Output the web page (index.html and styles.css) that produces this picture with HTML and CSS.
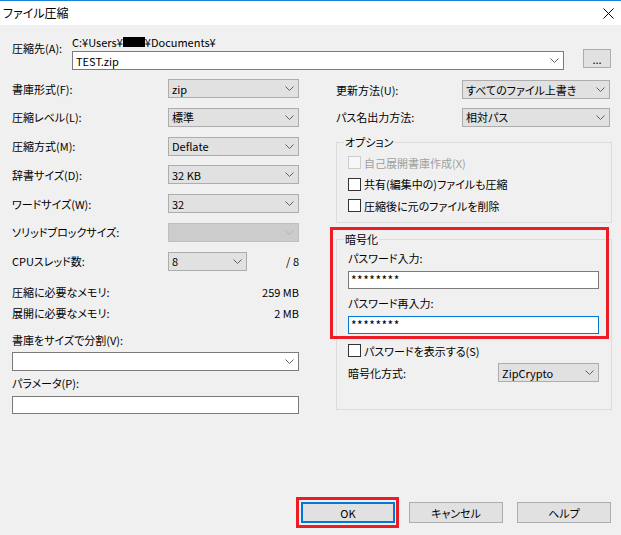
FILE: index.html
```html
<!DOCTYPE html>
<html lang="ja">
<head>
<meta charset="utf-8">
<title>ファイル圧縮</title>
<link rel="stylesheet" href="styles.css">
</head>
<body>
<div class="window">
  <div class="titlebar">
    <span class="title">ファイル圧縮</span>
    <svg class="close" width="11" height="11" viewBox="0 0 11 11"><path d="M0.5 0.5 L10.5 10.5 M10.5 0.5 L0.5 10.5" stroke="#000" stroke-width="1" fill="none"/></svg>
  </div>
  <div class="content">
    <div class="dest">
      <div class="dest-label">圧縮先(A):</div>
      <div class="dest-main">
        <div class="path">C:¥Users¥<span class="redact"></span>¥Documents¥</div>
        <div class="dest-row">
          <div class="combo edit dest-combo"><span>TEST.zip</span><svg class="chev" width="9" height="5" viewBox="0 0 9 5"><path d="M0.5 0.5 L4.5 4.5 L8.5 0.5" /></svg></div>
          <button class="btn browse">...</button>
        </div>
      </div>
    </div>

    <div class="columns">
      <div class="left">
        <div class="form-grid">
          <div class="lbl">書庫形式(F):</div>
          <div class="combo"><span>zip</span><svg class="chev" width="9" height="5" viewBox="0 0 9 5"><path d="M0.5 0.5 L4.5 4.5 L8.5 0.5" /></svg></div>
          <div class="lbl">圧縮レベル(L):</div>
          <div class="combo"><span>標準</span><svg class="chev" width="9" height="5" viewBox="0 0 9 5"><path d="M0.5 0.5 L4.5 4.5 L8.5 0.5" /></svg></div>
          <div class="lbl">圧縮方式(M):</div>
          <div class="combo"><span>Deflate</span><svg class="chev" width="9" height="5" viewBox="0 0 9 5"><path d="M0.5 0.5 L4.5 4.5 L8.5 0.5" /></svg></div>
          <div class="lbl">辞書サイズ(D):</div>
          <div class="combo"><span>32 KB</span><svg class="chev" width="9" height="5" viewBox="0 0 9 5"><path d="M0.5 0.5 L4.5 4.5 L8.5 0.5" /></svg></div>
          <div class="lbl">ワードサイズ(W):</div>
          <div class="combo"><span>32</span><svg class="chev" width="9" height="5" viewBox="0 0 9 5"><path d="M0.5 0.5 L4.5 4.5 L8.5 0.5" /></svg></div>
          <div class="lbl">ソリッドブロックサイズ:</div>
          <div class="combo disabled"><span></span><svg class="chev" width="9" height="5" viewBox="0 0 9 5"><path d="M0.5 0.5 L4.5 4.5 L8.5 0.5" /></svg></div>
          <div class="lbl">CPUスレッド数:</div>
          <div class="cpu">
            <div class="combo cpu-combo"><span>8</span><svg class="chev" width="9" height="5" viewBox="0 0 9 5"><path d="M0.5 0.5 L4.5 4.5 L8.5 0.5" /></svg></div>
            <span>/ 8</span>
          </div>
        </div>
        <div class="mem mem1"><span>圧縮に必要なメモリ:</span><span>259 MB</span></div>
        <div class="mem mem2"><span>展開に必要なメモリ:</span><span>2 MB</span></div>
        <div class="split-label">書庫をサイズで分割(V):</div>
        <div class="combo edit split-combo"><span></span><svg class="chev" width="9" height="5" viewBox="0 0 9 5"><path d="M0.5 0.5 L4.5 4.5 L8.5 0.5" /></svg></div>
        <div class="param-label">パラメータ(P):</div>
        <div class="input param-input"></div>
      </div>

      <div class="right">
        <div class="right-grid">
          <div class="lbl">更新方法(U):</div>
          <div class="combo"><span>すべてのファイル上書き</span><svg class="chev" width="9" height="5" viewBox="0 0 9 5"><path d="M0.5 0.5 L4.5 4.5 L8.5 0.5" /></svg></div>
          <div class="lbl">パス名出力方法:</div>
          <div class="combo"><span>相対パス</span><svg class="chev" width="9" height="5" viewBox="0 0 9 5"><path d="M0.5 0.5 L4.5 4.5 L8.5 0.5" /></svg></div>
        </div>

        <div class="group options">
          <div class="group-title">オプション</div>
          <div class="check first disabled-check"><span class="box"></span><span>自己展開書庫作成(X)</span></div>
          <div class="check"><span class="box"></span><span>共有(編集中の)ファイルも圧縮</span></div>
          <div class="check"><span class="box"></span><span>圧縮後に元のファイルを削除</span></div>
        </div>

        <div class="enc-wrap">
          <div class="group enc">
            <div class="group-title">暗号化</div>
            <div class="enc-lbl">パスワード入力:</div>
            <div class="input pw">********</div>
            <div class="enc-lbl lbl2">パスワード再入力:</div>
            <div class="input pw focus">********</div>
            <div class="check show"><span class="box"></span><span>パスワードを表示する(S)</span></div>
            <div class="method">
              <span>暗号化方式:</span>
              <div class="combo"><span>ZipCrypto</span><svg class="chev" width="9" height="5" viewBox="0 0 9 5"><path d="M0.5 0.5 L4.5 4.5 L8.5 0.5" /></svg></div>
            </div>
          </div>
          <span class="highlight enc-hl"></span>
        </div>
      </div>
    </div>

    <div class="buttons">
      <div class="ok-wrap">
        <button class="btn default">OK</button>
        <span class="highlight ok-hl"></span>
      </div>
      <button class="btn">キャンセル</button>
      <button class="btn">ヘルプ</button>
    </div>
  </div>
</div>
</body>
</html>
```

FILE: styles.css
```css
* { box-sizing: border-box; }
html, body { margin: 0; padding: 0; }
body {
  width: 621px;
  height: 535px;
  overflow: hidden;
  background: #f0f0f0;
  font-family: "Noto Sans CJK JP", "Noto Sans", sans-serif;
  font-size: 11px;
  color: #000;
  font-feature-settings: "palt";
}
.window { width: 621px; height: 535px; display: flex; flex-direction: column; }

.titlebar {
  height: 25px;
  background: #fff;
  border-top: 1px solid #1883d7;
  display: flex;
  align-items: center;
  justify-content: space-between;
  padding: 0 7px 0 3px;
}
.title { font-size: 12px; line-height: 14px; }
.close { display: block; }

.content {
  flex: 1;
  display: flex;
  flex-direction: column;
  padding: 0 10px 12px 12px;
}

.btn {
  font: inherit;
  font-feature-settings: "palt";
  color: #000;
  background: #e1e1e1;
  border: 1px solid #adadad;
  height: 21px;
  width: 94px;
  padding: 0;
  margin: 0;
}
.btn.default { border: 2px solid #0078d7; display: block; }

.dest { display: flex; padding-top: 10px; }
.dest-label { flex: none; width: 60px; margin-top: 6px; line-height: 14px; white-space: nowrap; }
.dest-main { flex: 1; min-width: 0; }
.path { line-height: 14px; height: 14px; display: flex; align-items: center; white-space: nowrap; }
.redact { display: inline-block; width: 22px; height: 10px; background: #000; }
.dest-row { display: flex; align-items: flex-start; gap: 19px; margin-top: 2px; }
.dest-combo { flex: none; width: 492px; }
.btn.browse { flex: none; width: 28px; height: 19px; margin-top: -2px; line-height: 10px; }

.combo {
  height: 19px;
  display: flex;
  align-items: center;
  justify-content: space-between;
  padding: 0 4px 0 3px;
  background: #e1e1e1;
  border: 1px solid #adadad;
  line-height: 14px;
  white-space: nowrap;
}
.combo.edit { background: #fff; border-color: #7a7a7a; }
.combo.disabled { background: #cccccc; border-color: #bfbfbf; }
.chev { display: block; flex: none; fill: none; stroke: #606060; stroke-width: 1; }
.combo.disabled .chev { stroke: #b5b5b5; }

.input {
  background: #fff;
  border: 1px solid #7a7a7a;
  padding: 0 2px;
  line-height: 16px;
}
.input.focus { border-color: #0078d7; }

.columns { display: flex; gap: 37px; margin-top: 9px; }
.left { width: 287px; flex: none; }
.right { width: 276px; flex: none; }

.form-grid {
  display: grid;
  grid-template-columns: 156px 131px;
  grid-auto-rows: 19px;
  row-gap: 9.75px;
  align-items: center;
}
.lbl { line-height: 14px; white-space: nowrap; }
.cpu { display: flex; align-items: center; justify-content: space-between; }
.cpu-combo { width: 79px; }

.mem { display: flex; justify-content: space-between; line-height: 14px; }
.mem1 { margin-top: 14.5px; }
.mem2 { margin-top: 7px; }
.split-label { margin-top: 13px; line-height: 14px; }
.split-combo { margin-top: 5px; }
.param-label { margin-top: 5px; line-height: 14px; }
.param-input { margin-top: 6px; height: 18px; }

.right-grid {
  display: grid;
  grid-template-columns: 126px 148px;
  grid-auto-rows: 19px;
  row-gap: 8.5px;
  align-items: center;
  margin-top: 1px;
}

.group {
  border: 1px solid #dcdcdc;
  padding: 0 12px 0 11px;
}
.group-title {
  width: fit-content;
  margin: -8px 0 0 -4px;
  padding: 0 1px;
  background: #f0f0f0;
  line-height: 14px;
  white-space: nowrap;
}

.options { margin-top: 15.5px; padding-bottom: 9.5px; }
.check { display: flex; align-items: center; gap: 3px; height: 14px; line-height: 14px; white-space: nowrap; }
.check.first { margin-top: 6.5px; }
.options .check + .check { margin-top: 7.5px; }
.box { width: 13px; height: 13px; border: 1px solid #333; background: #fff; flex: none; }
.disabled-check { color: #a0a0a0; }
.disabled-check .box { border-color: #cccccc; background: #f7f7f7; }

.enc-wrap { position: relative; margin-top: 16px; }
.enc { padding-bottom: 27px; }
.enc-lbl { margin-top: 5px; line-height: 14px; }
.enc-lbl.lbl2 { margin-top: 7px; }
.pw { margin-top: 6px; height: 18px; font-size: 12px; letter-spacing: 0.5px; }
.check.show { margin-top: 9.5px; }
.method { display: flex; justify-content: space-between; align-items: center; margin-top: 5.5px; line-height: 14px; }
.method .combo { width: 101px; }

.highlight { position: absolute; border: 3px solid #ed1c24; pointer-events: none; }
.enc-hl { left: -6px; top: -12px; width: 279px; height: 112px; }

.buttons { margin-top: auto; display: flex; justify-content: flex-end; gap: 14px; }
.ok-wrap { position: relative; }
.ok-hl { left: -5px; top: -5px; width: 103px; height: 31px; }
```
